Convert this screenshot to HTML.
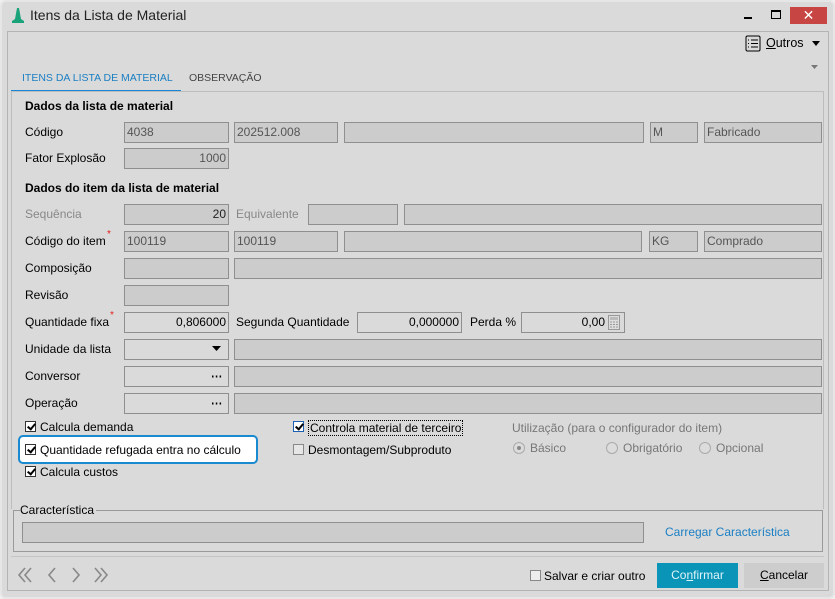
<!DOCTYPE html>
<html><head><meta charset="utf-8"><style>
*{box-sizing:border-box;margin:0;padding:0}
body{width:835px;height:599px;background:#f0f0f0;font-family:"Liberation Sans",sans-serif;font-size:12px;color:#000;position:relative;overflow:hidden}
.win{position:absolute;left:0;top:0;width:835px;height:599px;background:#dadada;border:2px solid #e6e6e6;border-radius:6px}
.a{position:absolute;white-space:nowrap}
.in{position:absolute;height:21px;background:#cccccc;border:1px solid #8f8f8f;color:#555;padding:1px 2px;font-size:12px;line-height:17px}
.ed{background:#dadada;color:#000}
.r{text-align:right}
.lb{position:absolute;font-size:12px;white-space:nowrap}
.b{font-weight:bold}
.cb{position:absolute;width:11px;height:11px;border:1px solid #333;background:#fff}
.cb.u{border-color:#888;background:#e6e6e6}
.cb.c::after{content:"";position:absolute;left:3px;top:0px;width:3px;height:6px;border:solid #000;border-width:0 2px 2px 0;transform:rotate(40deg)}
.rd{position:absolute;width:12px;height:12px;border:1px solid #aaa;border-radius:50%;background:#dcdcdc}
.st{color:#e02020;font-size:10px;position:absolute}
</style></head><body>
<div class="win"></div>
<svg class="a" style="left:11px;top:7px" width="14" height="17"><path d="M6 1 L8 1 L10 12 L13 14 L13 16 L1 16 L1 14 L4 12Z" fill="#1aa37a"/></svg>
<div class="a" style="left:30px;top:7px;font-size:14px;color:#222">Itens da Lista de Material</div>
<div class="a" style="left:744px;top:17px;width:8px;height:2px;background:#000"></div>
<div class="a" style="left:771px;top:10px;width:10px;height:9px;border:1px solid #000;border-top-width:2px"></div>
<div class="a" style="left:790px;top:7px;width:37px;height:17px;background:#c74643;color:#fff;text-align:center;font-size:14px;line-height:17px">✕</div>
<div class="a" style="left:7px;top:31px;width:822px;height:560px;border:1px solid #b4b4b4"></div>
<svg class="a" style="left:745px;top:35px" width="16" height="17"><rect x="1" y="1" width="14" height="15" rx="1.5" fill="none" stroke="#000"/><path d="M3 5h1M3 8.5h1M3 12h1M6 5h7M6 8.5h7M6 12h7" stroke="#000"/></svg>
<div class="a" style="left:766px;top:36px;font-size:12.5px"><u>O</u>utros</div>
<svg class="a" style="left:812px;top:41px" width="9" height="6"><path d="M0 0h8l-4 5z" fill="#000"/></svg>
<svg class="a" style="left:811px;top:65px" width="8" height="5"><path d="M0 0h7l-3.5 4z" fill="#777"/></svg>
<div class="a" style="left:22px;top:72px;font-size:10.5px;color:#1a7fc4">ITENS DA LISTA DE MATERIAL</div>
<div class="a" style="left:189px;top:72px;font-size:10.5px;color:#444">OBSERVAÇÃO</div>
<div class="a" style="left:11px;top:90px;width:170px;height:2px;background:#1a86d8"></div>
<div class="a" style="left:11px;top:91px;width:813px;height:418px;border:1px solid #bdbdbd;border-bottom:none"></div>

<div class="lb b" style="left:25px;top:99px">Dados da lista de material</div>
<div class="lb" style="left:25px;top:125px">Código</div>
<div class="in" style="left:124px;top:122px;width:105px">4038</div>
<div class="in" style="left:234px;top:122px;width:104px">202512.008</div>
<div class="in" style="left:344px;top:122px;width:300px"></div>
<div class="in" style="left:650px;top:122px;width:48px">M</div>
<div class="in" style="left:704px;top:122px;width:118px">Fabricado</div>
<div class="lb" style="left:25px;top:151px">Fator Explosão</div>
<div class="in r" style="left:124px;top:148px;width:105px">1000</div>

<div class="lb b" style="left:25px;top:181px">Dados do item da lista de material</div>
<div class="lb" style="left:25px;top:207px;color:#888">Sequência</div>
<div class="in r" style="left:124px;top:204px;width:105px;color:#222">20</div>
<div class="lb" style="left:236px;top:207px;color:#888">Equivalente</div>
<div class="in" style="left:308px;top:204px;width:90px"></div>
<div class="in" style="left:404px;top:204px;width:418px"></div>

<div class="lb" style="left:25px;top:234px">Código do item</div><div class="st" style="left:107px;top:229px">*</div>
<div class="in" style="left:124px;top:231px;width:105px">100119</div>
<div class="in" style="left:234px;top:231px;width:104px">100119</div>
<div class="in" style="left:344px;top:231px;width:298px"></div>
<div class="in" style="left:649px;top:231px;width:49px">KG</div>
<div class="in" style="left:704px;top:231px;width:118px">Comprado</div>

<div class="lb" style="left:25px;top:261px">Composição</div>
<div class="in" style="left:124px;top:258px;width:105px"></div>
<div class="in" style="left:234px;top:258px;width:588px"></div>
<div class="lb" style="left:25px;top:288px">Revisão</div>
<div class="in" style="left:124px;top:285px;width:105px"></div>

<div class="lb" style="left:25px;top:315px">Quantidade fixa</div><div class="st" style="left:110px;top:310px">*</div>
<div class="in ed r" style="left:124px;top:312px;width:105px">0,806000</div>
<div class="lb" style="left:236px;top:315px">Segunda Quantidade</div>
<div class="in ed r" style="left:357px;top:312px;width:105px">0,000000</div>
<div class="lb" style="left:470px;top:315px">Perda %</div>
<div class="in ed r" style="left:521px;top:312px;width:104px;padding-right:19px">0,00</div>
<svg class="a" style="left:608px;top:315px" width="12" height="15"><rect x="0.5" y="0.5" width="11" height="14" fill="#ddd" stroke="#999"/><rect x="2" y="2" width="8" height="3" fill="#bbb"/><path d="M2 7h2M5 7h2M8 7h2M2 9.5h2M5 9.5h2M8 9.5h2M2 12h2M5 12h2M8 12h2" stroke="#999"/></svg>

<div class="lb" style="left:25px;top:342px">Unidade da lista</div>
<div class="in ed" style="left:124px;top:339px;width:105px"></div>
<svg class="a" style="left:212px;top:346px" width="10" height="6"><path d="M0 0h9l-4.5 5z" fill="#000"/></svg>
<div class="in" style="left:234px;top:339px;width:588px"></div>
<div class="lb" style="left:25px;top:369px">Conversor</div>
<div class="in ed" style="left:124px;top:366px;width:105px"></div>
<svg class="a" style="left:211px;top:375px" width="11" height="3"><path d="M1 1.5h1.5M4.8 1.5h1.5M8.6 1.5h1.5" stroke="#000" stroke-width="2"/></svg>
<div class="in" style="left:234px;top:366px;width:588px"></div>
<div class="lb" style="left:25px;top:396px">Operação</div>
<div class="in ed" style="left:124px;top:393px;width:105px"></div>
<svg class="a" style="left:211px;top:402px" width="11" height="3"><path d="M1 1.5h1.5M4.8 1.5h1.5M8.6 1.5h1.5" stroke="#000" stroke-width="2"/></svg>
<div class="in" style="left:234px;top:393px;width:588px"></div>

<div class="cb c" style="left:25px;top:421px"></div><div class="lb" style="left:40px;top:420px">Calcula demanda</div>
<div class="a" style="left:18px;top:435px;width:240px;height:29px;border:2px solid #1a8ad0;border-radius:5px;background:#fff"></div>
<div class="cb c" style="left:25px;top:444px"></div><div class="lb" style="left:40px;top:443px">Quantidade refugada entra no cálculo</div>
<div class="cb c" style="left:25px;top:466px"></div><div class="lb" style="left:40px;top:465px">Calcula custos</div>

<div class="cb c" style="left:293px;top:421px;border-color:#1a5fb0"></div><div class="lb" style="left:308px;top:420px;border:1px dotted #000;padding:0 1px">Controla material de terceiro</div>
<div class="cb u" style="left:293px;top:444px"></div><div class="lb" style="left:308px;top:443px">Desmontagem/Subproduto</div>
<div class="lb" style="left:512px;top:421px;color:#777">Utilização (para o configurador do item)</div>
<div class="rd" style="left:513px;top:442px"><div style="position:absolute;left:3px;top:3px;width:4px;height:4px;border-radius:50%;background:#888"></div></div>
<div class="lb" style="left:530px;top:441px;color:#777">Básico</div>
<div class="rd" style="left:606px;top:442px"></div><div class="lb" style="left:623px;top:441px;color:#777">Obrigatório</div>
<div class="rd" style="left:699px;top:442px"></div><div class="lb" style="left:716px;top:441px;color:#777">Opcional</div>

<div class="a" style="left:13px;top:510px;width:810px;height:42px;border:1px solid #9a9a9a"></div>
<div class="lb" style="left:20px;top:503px;background:#dadada;padding-right:2px">Característica</div>
<div class="in" style="left:22px;top:522px;width:622px"></div>
<div class="lb" style="left:665px;top:525px;color:#1a7fc4">Carregar Característica</div>

<div class="a" style="left:11px;top:556px;width:813px;height:1px;background:#c4c4c4"></div>
<svg class="a" style="left:17px;top:566px" width="96" height="18"><g fill="none" stroke="#888" stroke-width="1.6"><path d="M8 2L2 9L8 16M14 2L8 9L14 16"/><path d="M38 2L32 9L38 16"/><path d="M56 2L62 9L56 16"/><path d="M78 2L84 9L78 16M84 2L90 9L84 16"/></g></svg>
<div class="cb u" style="left:530px;top:570px;background:#eee"></div><div class="lb" style="left:544px;top:569px">Salvar e criar outro</div>
<div class="a" style="left:657px;top:563px;width:81px;height:25px;background:#0a94b8;color:#dff3f8;text-align:center;line-height:25px">Co<u>n</u>firmar</div>
<div class="a" style="left:744px;top:563px;width:80px;height:25px;background:#cdcdcd;text-align:center;line-height:25px"><u>C</u>ancelar</div>
</body></html>
